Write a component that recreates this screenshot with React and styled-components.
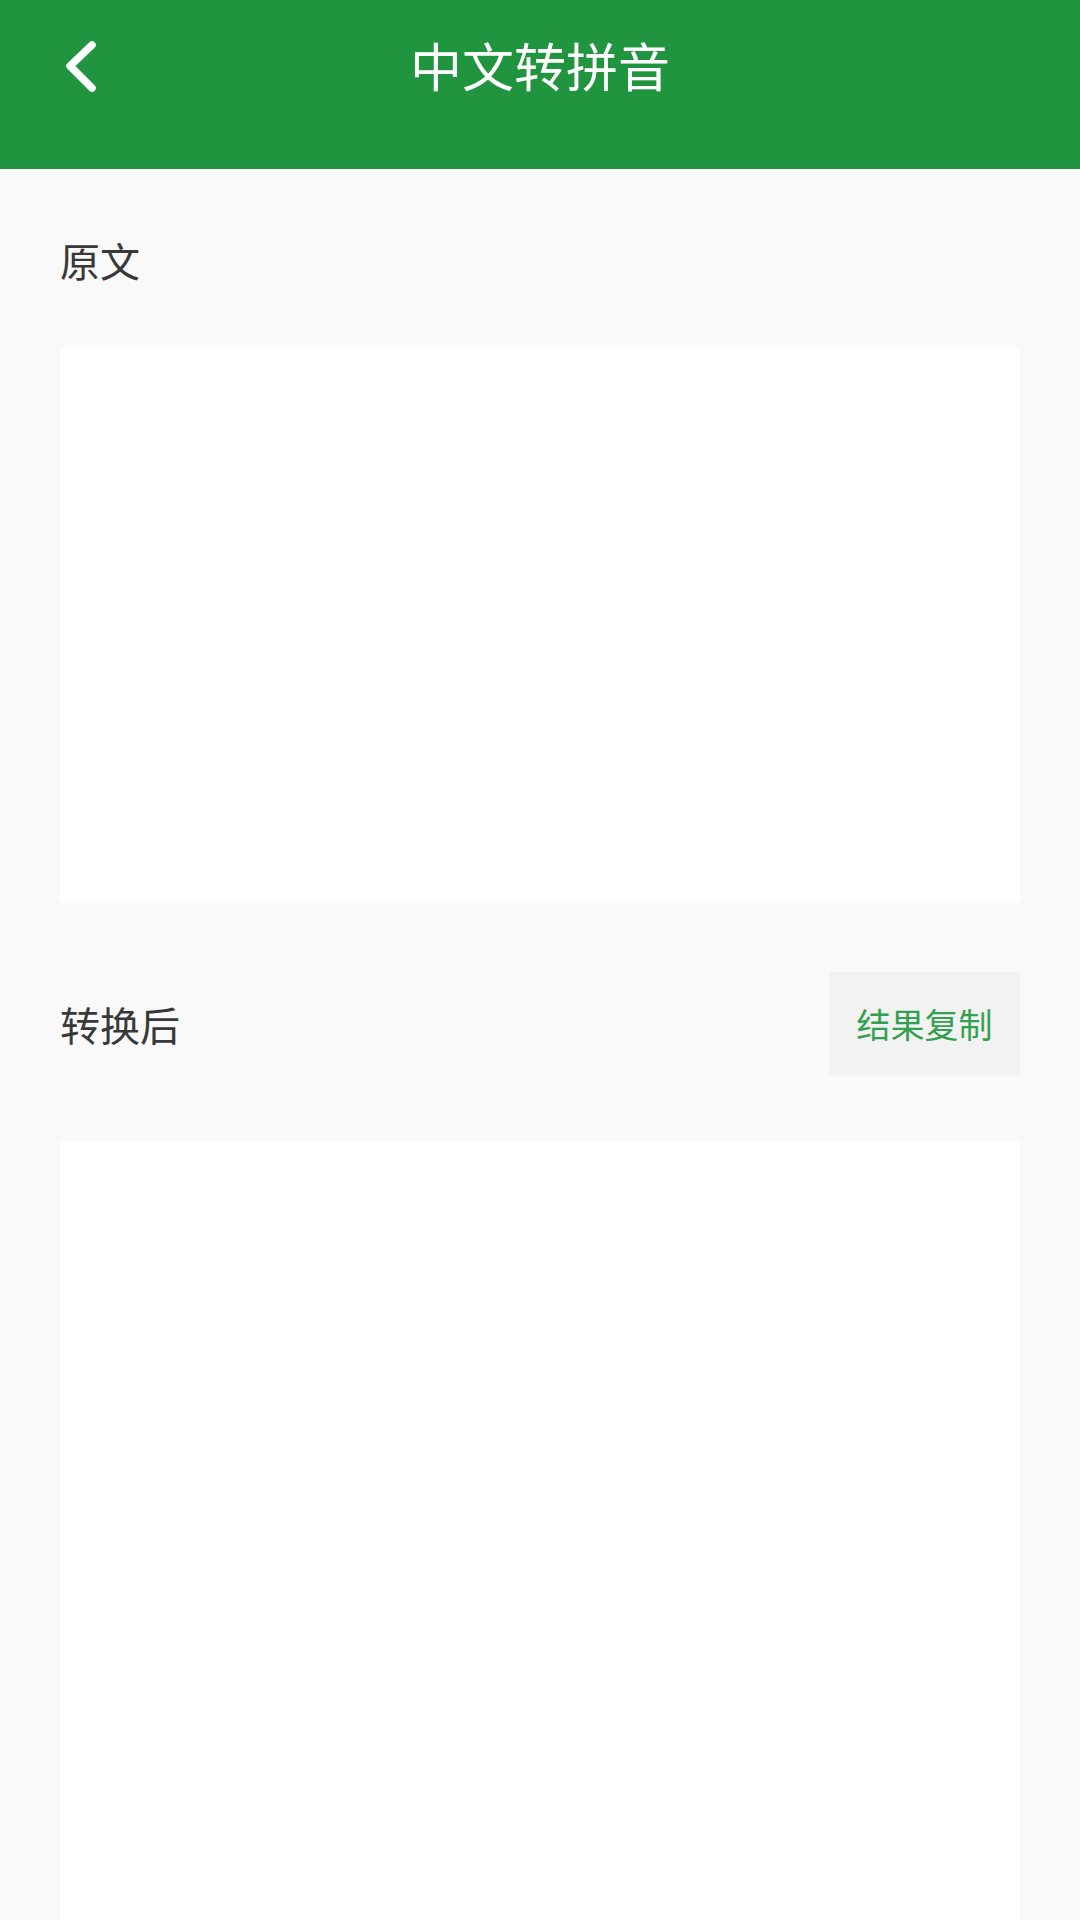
import React from "react";
import styled, { createGlobalStyle } from "styled-components";

const GlobalStyle = createGlobalStyle`
    html, body {
        margin: 0;
        padding: 0;
        background: #f9f9f9;
        font-family: "Noto Sans CJK SC", "Noto Sans", sans-serif;
    }
`;

const Page = styled.div`
    width: 1080px;
    height: 1920px;
    overflow: hidden;
    background: #f9f9f9;
`;

const Header = styled.header`
    height: 169px;
    background: #21943f;
    display: grid;
    grid-template-columns: 160px 1fr 160px;
    align-items: start;
`;

const BackButton = styled.button`
    height: 130px;
    border: none;
    background: none;
    padding: 0 0 0 62px;
    display: flex;
    align-items: center;
    cursor: pointer;
`;

const Title = styled.h1`
    margin: 0;
    height: 130px;
    line-height: 130px;
    text-align: center;
    color: #fff;
    font-size: 52px;
    font-weight: 400;
`;

const Content = styled.main`
    padding: 39px 60px 0;
`;

const LabelRow = styled.div`
    height: 103px;
    display: flex;
    align-items: center;
    justify-content: space-between;
    margin-top: ${(p) => p.$gap || 0}px;
`;

const Label = styled.span`
    font-size: 40px;
    color: #383838;
`;

const CopyButton = styled.button`
    height: 103px;
    width: 191px;
    border: none;
    border-radius: 4px;
    background: #f2f2f2;
    color: #32a050;
    font-family: inherit;
    font-size: 34px;
    padding: 0;
    cursor: pointer;
`;

const TextBox = styled.textarea`
    display: block;
    box-sizing: border-box;
    width: 960px;
    height: ${(p) => p.$height}px;
    margin-top: ${(p) => p.$gap}px;
    border: none;
    border-radius: 4px;
    background: #fff;
    resize: none;
    outline: none;
    padding: 24px;
    font-family: inherit;
    font-size: 36px;
`;

const BackIcon = () => (
    <svg width="40" height="60" viewBox="0 0 40 60">
        <polyline points="30,10 8,31 30,53" fill="none" stroke="#fff" strokeWidth="7.5" strokeLinecap="round" strokeLinejoin="round" />
    </svg>
);

const App = () => {
    return (
        <React.Fragment>
            <GlobalStyle />
            <Page>
                <Header>
                    <BackButton aria-label="返回"><BackIcon /></BackButton>
                    <Title>中文转拼音</Title>
                    <div />
                </Header>
                <Content>
                    <LabelRow>
                        <Label>原文</Label>
                    </LabelRow>
                    <TextBox $height={556} $gap={36} />
                    <LabelRow $gap={69}>
                        <Label>转换后</Label>
                        <CopyButton>结果复制</CopyButton>
                    </LabelRow>
                    <TextBox $height={800} $gap={66} readOnly />
                </Content>
            </Page>
        </React.Fragment>
    );
};

export default App;
